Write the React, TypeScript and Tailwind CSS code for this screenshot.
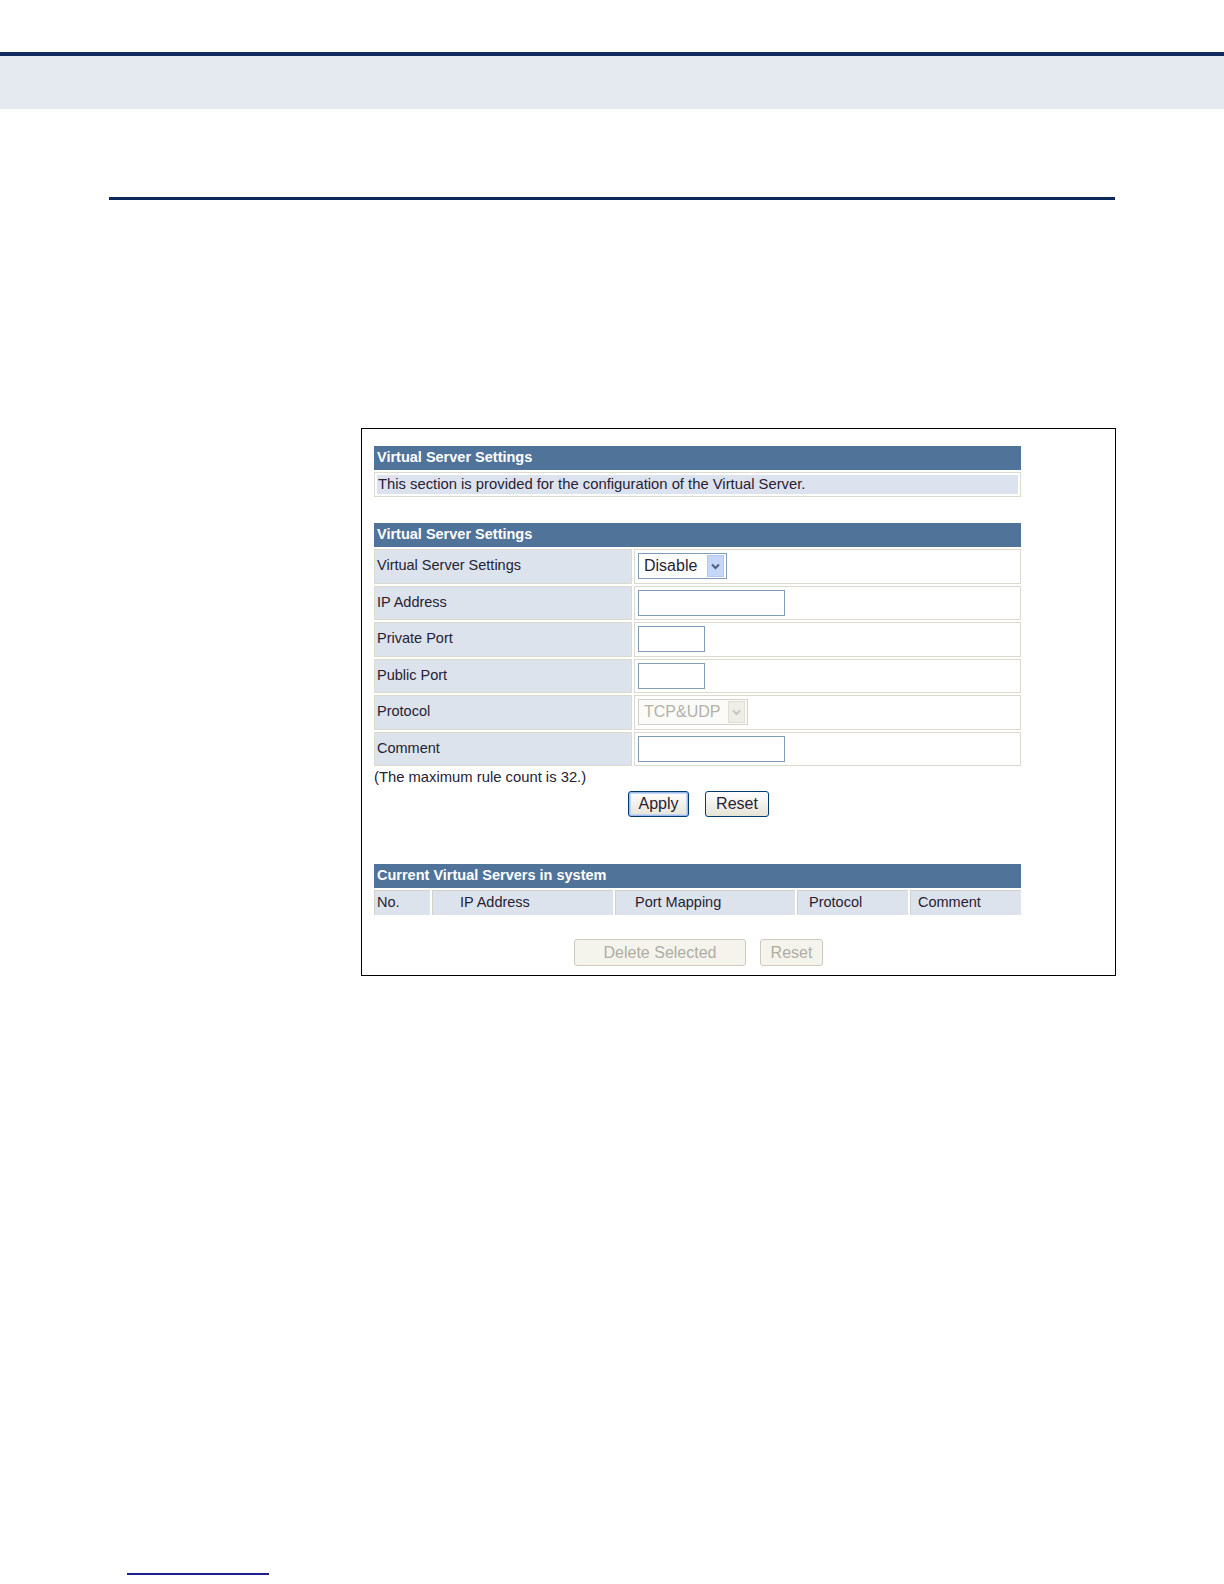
import React from "react";

// Virtual Server settings page — router admin screenshot inside a manual page.

const font = { fontFamily: '"Liberation Sans", Arial, sans-serif' };

function Header({ children }: { children: React.ReactNode }) {
  return (
    <div className="h-[24px] bg-[#50739a] pl-[3px] flex items-center text-white font-bold text-[14.5px]">
      {children}
    </div>
  );
}

function Chevron({ color }: { color: string }) {
  return (
    <svg width="9" height="7" viewBox="0 0 9 7" fill="none">
      <path d="M1 1.5 4.5 5 8 1.5" stroke={color} strokeWidth="2" />
    </svg>
  );
}

function Row({ label, children }: { label: string; children: React.ReactNode }) {
  return (
    <div className="flex gap-[2px] h-[34.5px]">
      <div className="w-[258px] bg-[#dce3ec] border border-[#dcd9cf] flex items-center pl-[2px] text-[14.5px] text-[#262233]">
        {label}
      </div>
      <div className="flex-1 bg-white border border-[#dcd9cf] flex items-center pl-[3px]">
        {children}
      </div>
    </div>
  );
}

function TextInput({ w }: { w: string }) {
  return <div className={`${w} h-[26px] border border-[#7f9db9] bg-white`} />;
}

export default function App() {
  const cols = [
    { label: "No.", w: "w-[56px]", pl: "pl-[2px]" },
    { label: "IP Address", w: "w-[181px]", pl: "pl-[27px]" },
    { label: "Port Mapping", w: "w-[180px]", pl: "pl-[19px]" },
    { label: "Protocol", w: "w-[111px]", pl: "pl-[11px]" },
    { label: "Comment", w: "w-[111px]", pl: "pl-[7px]" },
  ];

  return (
    <div className="w-[1224px] h-[1584px] bg-white overflow-hidden" style={font}>
      <div className="h-[52px]" />
      <div className="h-[4px] bg-[#0f2b5f]" />
      <div className="h-[53px] bg-[#e5e9f0]" />

      <div className="mt-[88px] ml-[109px] w-[1006px] h-[3px] bg-[#0c2858]" />

      {/* screenshot frame */}
      <div className="mt-[228px] ml-[361px] w-[755px] h-[548px] border border-black pt-[17px] pl-[12px]">
        <div className="w-[647px]">
          <Header>Virtual Server Settings</Header>
          <div className="mt-[2px] h-[25px] border border-[#dcd9cf] p-[2px]">
            <div className="h-full bg-[#dde3ee] flex items-center pl-[1px] text-[14.8px] text-[#262233]">
              This section is provided for the configuration of the Virtual Server.
            </div>
          </div>

          <div className="mt-[26px]">
            <Header>Virtual Server Settings</Header>
          </div>
          <div className="mt-[2px] flex flex-col gap-[2px]">
            <Row label="Virtual Server Settings">
              <div className="w-[89px] h-[26px] border border-[#7f9db9] bg-white flex items-center justify-between pl-[5px] pr-[2px]">
                <span className="text-[16px] text-[#262233]">Disable</span>
                <span className="w-[17px] h-[22px] bg-[#c6d6f7] border border-[#b4c8f0] flex items-center justify-center">
                  <Chevron color="#4d6185" />
                </span>
              </div>
            </Row>
            <Row label="IP Address">
              <TextInput w="w-[147px]" />
            </Row>
            <Row label="Private Port">
              <TextInput w="w-[67px]" />
            </Row>
            <Row label="Public Port">
              <TextInput w="w-[67px]" />
            </Row>
            <Row label="Protocol">
              <div className="w-[110px] h-[26px] border border-[#d4d2c8] bg-[#fbfbf8] flex items-center justify-between pl-[5px] pr-[2px]">
                <span className="text-[16px] text-[#b3b1a8]">TCP&amp;UDP</span>
                <span className="w-[17px] h-[22px] bg-[#eeede6] border border-[#e0ded6] flex items-center justify-center">
                  <Chevron color="#c9c7bf" />
                </span>
              </div>
            </Row>
            <Row label="Comment">
              <TextInput w="w-[147px]" />
            </Row>
          </div>

          <div className="mt-[2px] h-[18px] flex items-center text-[14.8px] text-[#262233]">
            (The maximum rule count is 32.)
          </div>

          <div className="mt-[5px] flex justify-center gap-[16px] pl-[2px]">
            <button className="w-[61px] h-[26px] rounded-[3px] border border-[#003c74] bg-gradient-to-b from-white to-[#e6e3d6] shadow-[inset_0_0_0_1px_#9fbaea,inset_0_0_0_2px_#c4d5f5] text-[16px] text-[#262233]">
              Apply
            </button>
            <button className="w-[64px] h-[26px] rounded-[3px] border border-[#003c74] bg-gradient-to-b from-white to-[#e6e3d6] text-[16px] text-[#262233]">
              Reset
            </button>
          </div>

          <div className="mt-[47px]">
            <Header>Current Virtual Servers in system</Header>
          </div>
          <div className="mt-[2px] flex gap-[2px] h-[25px]">
            {cols.map((c) => (
              <div
                key={c.label}
                className={`${c.w} ${c.pl} bg-[#dde3ec] border-l border-t border-[#d3d1c8] flex items-center text-[14.5px] text-[#262233]`}
              >
                {c.label}
              </div>
            ))}
          </div>

          <div className="mt-[24px] flex justify-center gap-[14px] pl-[2px]">
            <button className="w-[172px] h-[27px] rounded-[3px] border border-[#cdcabd] bg-[#f5f4ec] text-[16px] text-[#afada3]">
              Delete Selected
            </button>
            <button className="w-[63px] h-[27px] rounded-[3px] border border-[#cdcabd] bg-[#f5f4ec] text-[16px] text-[#afada3]">
              Reset
            </button>
          </div>
        </div>
      </div>

      <div className="mt-[597px] ml-[127px] w-[142px] h-[2px] bg-[#1c1f94]" />
    </div>
  );
}
